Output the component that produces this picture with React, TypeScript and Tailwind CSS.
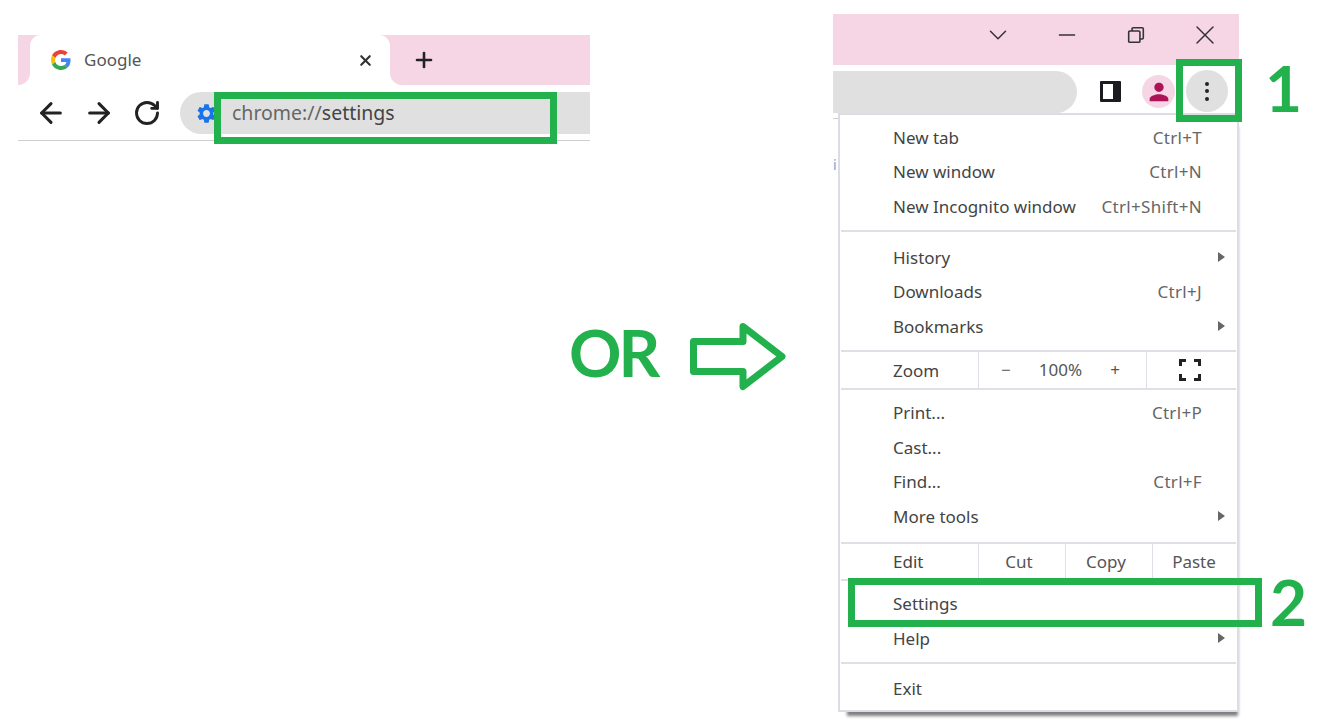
import { ArrowLeft, ArrowRight, ChevronDown, Minus, Plus, RotateCw, X } from "lucide-react";
import { MdPerson, MdSettings } from "react-icons/md";

const textFont = "font-['Noto_Sans','Open_Sans',sans-serif]";

function GoogleLogo() {
  return (
    <svg viewBox="0 0 48 48" className="h-[20px] w-[20px]">
      <path fill="#EA4335" d="M24 9.5c3.5 0 6.7 1.2 9.2 3.600l6.900-6.900C35.900 2.400 30.400 0 24 0 14.600 0 6.500 5.400 2.600 13.200l8 6.200C12.400 13.700 17.700 9.500 24 9.500z" />
      <path fill="#4285F4" d="M46.900 24.500c0-1.600-.2-3.100-.4-4.500H24v9h12.900c-.6 3-2.200 5.500-4.700 7.200l7.700 6c4.500-4.200 7-10.300 7-17.700z" />
      <path fill="#FBBC05" d="M10.500 28.600c-.5-1.400-.8-3-.8-4.600s.3-3.200.8-4.600l-8-6.200C.9 16.500 0 20.100 0 24s.9 7.500 2.600 10.800l7.900-6.200z" />
      <path fill="#34A853" d="M24 48c6.500 0 11.900-2.100 15.900-5.800l-7.700-6c-2.200 1.500-5 2.300-8.200 2.300-6.300 0-11.600-4.200-13.500-9.900l-8 6.200C6.500 42.600 14.600 48 24 48z" />
    </svg>
  );
}

function TabStrip() {
  return (
    <div className="flex h-[50px] bg-white">
      <div className="w-[12px] rounded-br-[12px] bg-[#f6d5e5]" />
      <div className="w-[360px] bg-[#f6d5e5]">
        <div className="flex h-full items-center rounded-t-[11px] bg-white pl-[21px] pr-[16px]">
          <GoogleLogo />
          <span className={`ml-[13px] flex-1 text-[17px] text-[#555] ${textFont}`}>Google</span>
          <X className="h-[17px] w-[17px] text-[#333]" strokeWidth={3} />
        </div>
      </div>
      <div className="flex flex-1 items-center rounded-bl-[12px] bg-[#f6d5e5] pl-[22px]">
        <Plus className="h-[24px] w-[24px] text-[#222]" strokeWidth={2.6} />
      </div>
    </div>
  );
}

function LeftBrowser() {
  return (
    <div className="mt-[35px] ml-[18px] w-[572px] shrink-0">
      <TabStrip />
      <div className="relative flex h-[56px] items-start border-b border-[#cfcfcf] pt-[7px]">
        <div className="flex h-[42px] w-[162px] shrink-0 items-center gap-[16px] pl-[17px] text-[#222]">
          <ArrowLeft className="h-[32px] w-[32px]" strokeWidth={2.3} />
          <ArrowRight className="h-[32px] w-[32px]" strokeWidth={2.3} />
          <RotateCw className="ml-[2px] h-[28px] w-[28px]" strokeWidth={2.5} />
        </div>
        <div className="flex h-[42px] flex-1 items-center rounded-l-[21px] bg-[#e0e0e0] pl-[15px]">
          <MdSettings className="h-[23px] w-[23px] text-[#1a73e8]" />
          <span className={`ml-[14px] text-[19.5px] text-[#666] ${textFont}`}>
            chrome://<span className="text-[#444]">settings</span>
          </span>
        </div>
        <div className="absolute top-[7px] left-[196px] h-[52px] w-[343px] border-[7px] border-[#22b14c]" />
      </div>
    </div>
  );
}

function OrArrow() {
  return (
    <div className="mt-[318px] ml-[-21px] flex w-[264px] shrink-0 items-center">
      <span className="w-[121px] pb-[8px] text-[65px] leading-[69px] font-bold tracking-[-3px] text-[#22b14c] font-['Lato',sans-serif]">OR</span>
      <svg viewBox="0 0 97 69" className="h-[69px] w-[97px]">
        <path
          d="M3.500 19.500H53V4.500L92 34.500 53 64.500V49.500H3.500z"
          fill="none"
          stroke="#22b14c"
          strokeWidth="7"
          strokeLinejoin="round"
        />
      </svg>
    </div>
  );
}

function MenuRow({ label, shortcut, submenu }: { label: string; shortcut?: string; submenu?: boolean }) {
  return (
    <div className="flex h-[34.5px] items-center pb-[2px] pl-[53px] pr-[35px]">
      <span className="flex-1 text-[#444]">{label}</span>
      {shortcut && <span className="tracking-[0.3px] text-[#666]">{shortcut}</span>}
      {submenu && <span className="mr-[-23px] h-0 w-0 border-y-[5.500px] border-l-[7px] border-y-transparent border-l-[#666]" />}
    </div>
  );
}

function Separator() {
  return <div className="mx-[1px] h-[2px] bg-[#dfdfe6]" />;
}

function ZoomRow() {
  return (
    <div className="flex h-[36px] items-center text-[#555]">
      <span className="w-[138px] pt-[1px] pl-[53px] text-[#444]">Zoom</span>
      <div className="flex h-full w-[169px] items-center justify-center gap-[26px] border-x border-[#dfdfe6] pr-[4px]">
        <span className="w-[14px] text-center">−</span>
        <span>100%</span>
        <span className="w-[14px] text-center">+</span>
      </div>
      <div className="flex flex-1 justify-center pr-[4px]">
        <svg viewBox="0 0 22 22" className="h-[22px] w-[22px]" fill="none" stroke="#222" strokeWidth="3">
          <path d="M1.500 7V1.500H7M15 1.500H20.500V7M20.500 15V20.500H15M7 20.500H1.500V15" />
        </svg>
      </div>
    </div>
  );
}

function EditRow() {
  return (
    <div className="flex h-[35px] items-center text-[#555]">
      <span className="w-[138px] pl-[53px] text-[#444]">Edit</span>
      <span className="flex h-full w-[87px] items-center justify-center border-l border-[#dfdfe6] pr-[6px]">Cut</span>
      <span className="flex h-full w-[87px] items-center justify-center border-l border-[#dfdfe6] pr-[6px]">Copy</span>
      <span className="flex h-full flex-1 items-center justify-center border-l border-[#dfdfe6] pr-[2px]">Paste</span>
    </div>
  );
}

function ChromeMenu() {
  return (
    <div className={`relative ml-[5px] h-[599px] w-[401px] border-2 border-[#dcdce4] bg-white text-[17px] shadow-[4px_9px_3px_-5px_rgba(0,0,0,0.5)] ${textFont}`}>
      <div className="pt-[6px] pb-[5px]">
        <MenuRow label="New tab" shortcut="Ctrl+T" />
        <MenuRow label="New window" shortcut="Ctrl+N" />
        <MenuRow label="New Incognito window" shortcut="Ctrl+Shift+N" />
      </div>
      <Separator />
      <div className="pt-[9.5px] pb-[5.5px]">
        <MenuRow label="History" submenu />
        <MenuRow label="Downloads" shortcut="Ctrl+J" />
        <MenuRow label="Bookmarks" submenu />
      </div>
      <Separator />
      <ZoomRow />
      <Separator />
      <div className="pt-[6.5px] pb-[7.5px]">
        <MenuRow label="Print..." shortcut="Ctrl+P" />
        <MenuRow label="Cast..." />
        <MenuRow label="Find..." shortcut="Ctrl+F" />
        <MenuRow label="More tools" submenu />
      </div>
      <Separator />
      <EditRow />
      <Separator />
      <div className="pt-[6.5px] pb-[5.5px]">
        <MenuRow label="Settings" />
        <MenuRow label="Help" submenu />
      </div>
      <Separator />
      <div className="pt-[8px]">
        <MenuRow label="Exit" />
      </div>
    </div>
  );
}

function RightBrowser() {
  return (
    <div className="relative mt-[14px] w-[406px] shrink-0">
      <div className="flex h-[51px] items-center justify-end bg-[#f6d5e5] pb-[9px] text-[#333]">
        <span className="flex w-[69px] justify-center"><ChevronDown className="h-[30px] w-[30px]" strokeWidth={1.2} /></span>
        <span className="flex w-[69px] justify-center"><Minus className="h-[26px] w-[26px]" strokeWidth={1.4} /></span>
        <span className="flex w-[69px] justify-center">
          <svg viewBox="0 0 16 16" className="h-[18px] w-[18px]" fill="none" stroke="#333" strokeWidth="1.4">
            <rect x="1.500" y="4.500" width="10" height="10" rx="1" />
            <path d="M4.500 4.500V2.500a1 1 0 0 1 1-1H13.500a1 1 0 0 1 1 1V10.500a1 1 0 0 1-1 1H11.500" />
          </svg>
        </span>
        <span className="flex w-[69px] justify-center"><X className="h-[32px] w-[32px]" strokeWidth={1.1} /></span>
      </div>
      <div className="flex h-[48px] items-start pt-[6px]">
        <div className="h-[42px] w-[244px] rounded-r-[21px] bg-[#e0e0e0]" />
        <svg viewBox="0 0 21 21" className="mt-[10px] ml-[23px] h-[21px] w-[21px]">
          <rect width="21" height="21" rx="1" fill="#1c1c20" />
          <rect x="3" y="3" width="10" height="15" fill="#fff" />
        </svg>
        <div className="mt-[4px] ml-[21px] flex h-[33px] w-[33px] items-center justify-center rounded-full bg-[#f6d5e5]">
          <MdPerson className="h-[28px] w-[28px] text-[#ad1457]" />
        </div>
        <div className="mt-[-1px] ml-[11px] flex h-[42px] w-[42px] flex-col items-center justify-center gap-[3.500px] rounded-full bg-[#e0e0e0]">
          <span className="h-[4px] w-[4px] rounded-full bg-[#222]" />
          <span className="h-[4px] w-[4px] rounded-full bg-[#222]" />
          <span className="h-[4px] w-[4px] rounded-full bg-[#222]" />
        </div>
      </div>
      <div className="absolute top-[104px] left-0 h-[1px] w-[5px] bg-[#cfcfcf]" />
      <span className={`absolute top-[141px] left-0 text-[14px] leading-[20px] text-[#6ea4dc] ${textFont}`}>i</span>
      <ChromeMenu />
      <div className="absolute top-[45px] left-[343px] h-[63px] w-[66px] border-[7px] border-[#22b14c]" />
      <div className="absolute top-[564px] left-[15px] h-[49px] w-[414px] border-[7px] border-[#22b14c]" />
      <span className="absolute top-[38px] left-[432px] text-[64px] leading-[72px] font-bold text-[#22b14c] font-['Lato',sans-serif]">1</span>
      <span className="absolute top-[552px] left-[437px] text-[64px] leading-[72px] font-bold text-[#22b14c] font-['Lato',sans-serif]">2</span>
    </div>
  );
}

export default function App() {
  return (
    <div className="relative flex h-[726px] w-[1317px] items-start overflow-hidden bg-white">
      <LeftBrowser />
      <OrArrow />
      <RightBrowser />
    </div>
  );
}
